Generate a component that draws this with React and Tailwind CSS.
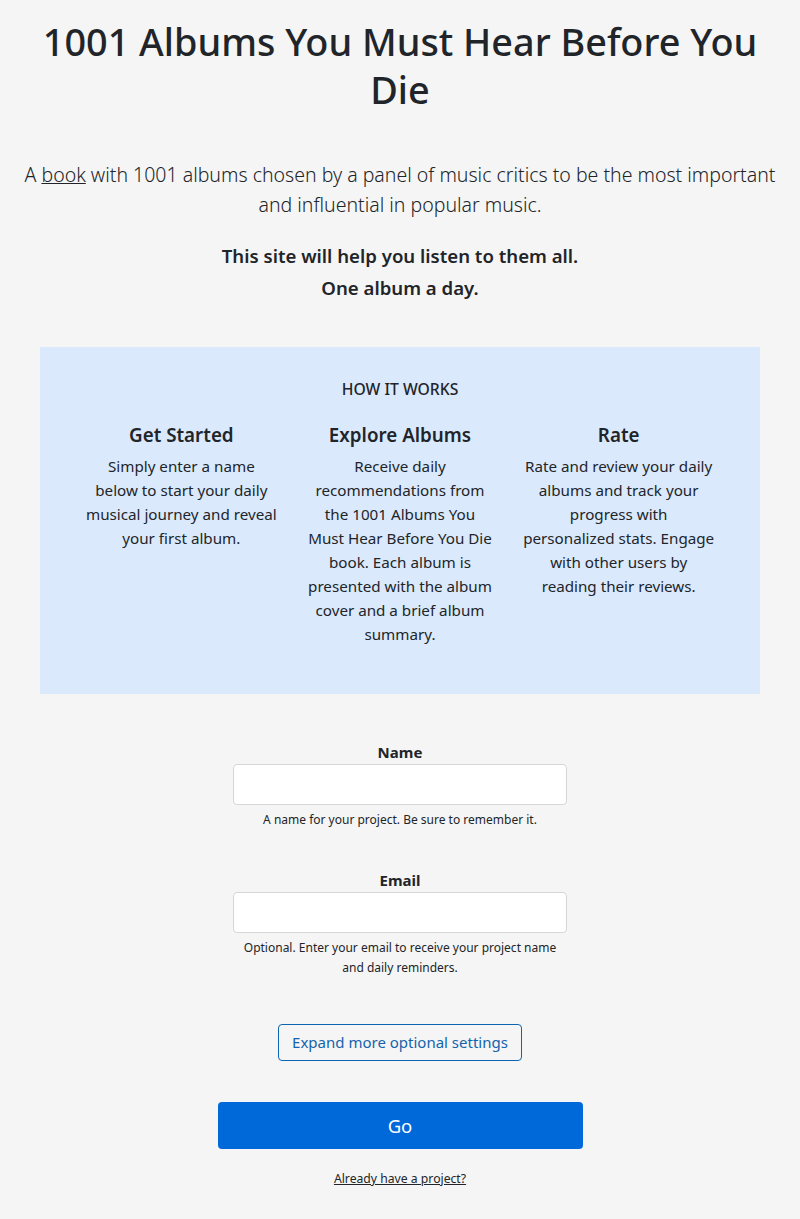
export default function App() {
  const font = { fontFamily: '"Noto Sans", "Open Sans", sans-serif' };
  return (
    <div className="min-h-[1219px] bg-[#f5f5f5] text-[#212529]" style={font}>
      <div className="mx-auto max-w-[800px] px-3 pt-[18px] pb-8 text-center">
        <h1 className="text-[37.8px] leading-[48px] font-medium">
          1001 Albums You Must Hear Before You Die
        </h1>
        <p className="mt-[46px] text-[19.5px] leading-[30px] font-light">
          A <a className="underline">book</a> with 1001 albums chosen by a panel of music critics to be the most important and influential in popular music.
        </p>
        <div className="mt-[20px] text-[18.6px] leading-[32px] font-semibold">
          <p>This site will help you listen to them all.</p>
          <p>One album a day.</p>
        </div>
      </div>
      <div className="mx-10 mt-[11px] bg-[#dbe9fd] px-8 pt-[30px] pb-[48px] text-center">
        <h2 className="text-[15.7px] leading-[24px] font-medium uppercase">How it works</h2>
        <div className="mt-[22px] grid grid-cols-3">
          <Col
            title="Get Started"
            lines={["Simply enter a name", "below to start your daily", "musical journey and reveal", "your first album."]}
          />
          <Col
            title="Explore Albums"
            lines={[
              "Receive daily",
              "recommendations from",
              "the 1001 Albums You",
              "Must Hear Before You Die",
              "book. Each album is",
              "presented with the album",
              "cover and a brief album",
              "summary.",
            ]}
          />
          <Col
            title="Rate"
            lines={[
              "Rate and review your daily",
              "albums and track your",
              "progress with",
              "personalized stats. Engage",
              "with other users by",
              "reading their reviews.",
            ]}
          />
        </div>
      </div>
      <div className="mx-auto mt-[46px] flex w-[334px] flex-col items-center text-center">
        <label className="text-[15px] leading-[24px] font-bold">Name</label>
        <input className="h-[41px] w-full rounded-[4px] border border-[#d6d6d6] bg-white" />
        <p className="mt-[5px] text-[12px] leading-[20px]">A name for your project. Be sure to remember it.</p>
        <label className="mt-[38px] text-[15px] leading-[24px] font-bold">Email</label>
        <input className="h-[41px] w-full rounded-[4px] border border-[#d6d6d6] bg-white" />
        <p className="mt-[5px] px-2 text-[12px] leading-[20px]">Optional. Enter your email to receive your project name and daily reminders.</p>
        <button className="mt-[46px] h-[37px] rounded-[4px] border border-[#0d64b0] px-[13px] text-[15px] text-[#1463ac]">
          Expand more optional settings
        </button>
      </div>
      <div className="mx-auto mt-[41px] flex w-[365px] flex-col items-center">
        <button className="h-[47px] w-full rounded-[4px] bg-[#0069d9] text-[18.5px] text-white">Go</button>
        <a className="mt-[20px] text-[12.2px] leading-[20px] underline">Already have a project?</a>
      </div>
    </div>
  );
}

function Col({ title, lines }) {
  return (
    <div className="px-1">
      <h3 className="text-[18.8px] leading-[24px] font-semibold">{title}</h3>
      <p className="mt-[7px] text-[15.2px] leading-[24px] font-normal">
        {lines.map((l, i) => (
          <span key={i} className="block">
            {l}
          </span>
        ))}
      </p>
    </div>
  );
}
